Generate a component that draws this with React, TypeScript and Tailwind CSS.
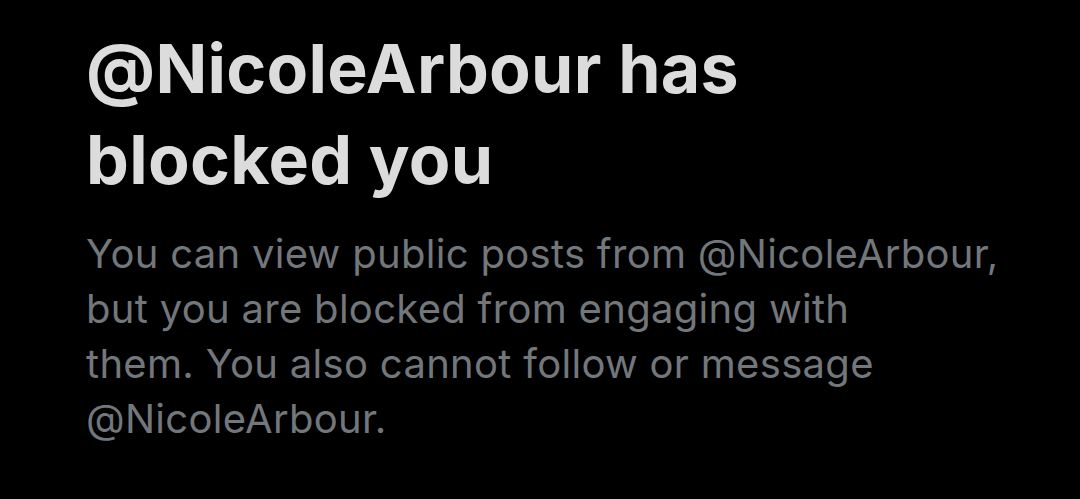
export default function App() {
  return (
    <main className="min-h-screen w-full bg-black">
      <section className="pl-[86px] pt-[23px] font-['Inter',sans-serif]">
        <h1 className="text-[68px] leading-[91px] font-bold tracking-[0.3px] text-[#dcdcdc]">
          @NicoleArbour has
          <br />
          blocked you
        </h1>
        <p className="mt-[21px] text-[40px] leading-[55px] tracking-[0.3px] text-[#72777c]">
          You can view public posts from @NicoleArbour,
          <br />
          but you are blocked from engaging with
          <br />
          them. You also cannot follow or message
          <br />
          @NicoleArbour.
        </p>
      </section>
    </main>
  );
}
